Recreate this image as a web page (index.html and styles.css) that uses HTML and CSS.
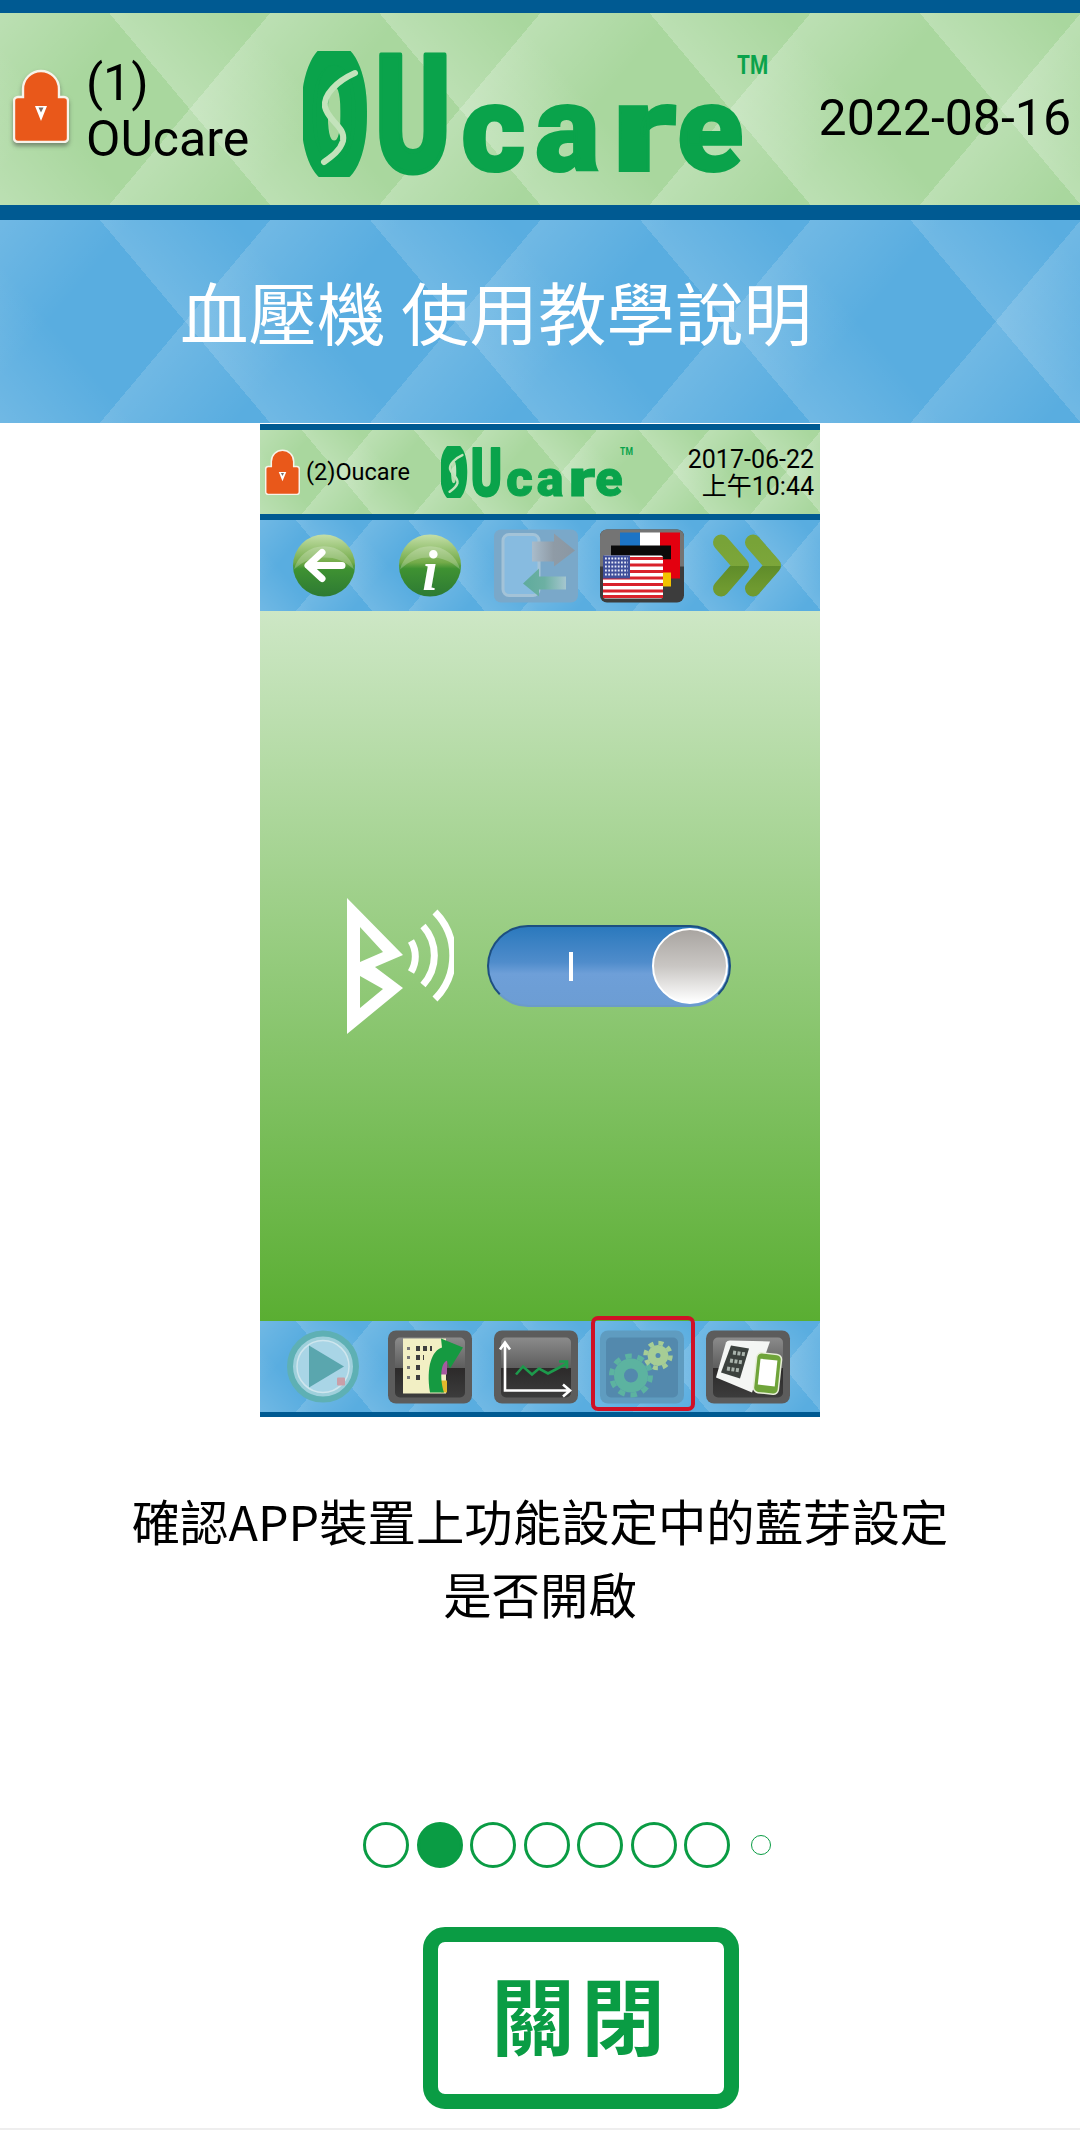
FILE: index.html
```html
<!DOCTYPE html>
<html lang="zh-Hant">
<head>
<meta charset="utf-8">
<title>OUcare</title>
<link rel="stylesheet" href="styles.css">
</head>
<body>
<svg class="defs" width="0" height="0" aria-hidden="true">
  <defs>
    <linearGradient id="ballTop" x1="0" y1="0" x2="0" y2="1">
      <stop offset="0" stop-color="#c4dfa8"/><stop offset=".45" stop-color="#73ab49"/><stop offset=".55" stop-color="#3f9232"/><stop offset="1" stop-color="#2d7a33"/>
    </linearGradient>
    <linearGradient id="tile" x1="0" y1="0" x2="0" y2="1">
      <stop offset="0" stop-color="#8b8b8b"/><stop offset=".5" stop-color="#5e5e5e"/><stop offset=".51" stop-color="#2c2a2a"/><stop offset="1" stop-color="#3c3c3c"/>
    </linearGradient>
    <linearGradient id="chev" x1="0" y1="0" x2="0" y2="1">
      <stop offset="0" stop-color="#78a338"/><stop offset=".5" stop-color="#7ca63a"/><stop offset=".51" stop-color="#5f8c2a"/><stop offset="1" stop-color="#6f9a30"/>
    </linearGradient>
    <linearGradient id="fadeGrey" x1="0" y1="0" x2="1" y2="0">
      <stop offset="0" stop-color="#a9bccb"/><stop offset=".5" stop-color="#8f9ba6"/><stop offset="1" stop-color="#8a97a3"/>
    </linearGradient>
    <linearGradient id="fadeTeal" x1="0" y1="0" x2="1" y2="0">
      <stop offset="0" stop-color="#5fab9c"/><stop offset=".5" stop-color="#6cb0a3"/><stop offset="1" stop-color="#a5c6cf"/>
    </linearGradient>
    <symbol id="lock" viewBox="0 0 56 74">
      <path d="M10 28V20a18 18 0 1 1 36 0v8h5a4 4 0 0 1 4 4v37a4 4 0 0 1-4 4H5a4 4 0 0 1-4-4V32a4 4 0 0 1 4-4z" fill="#e9581a" stroke="#f7f3ea" stroke-width="2.400"/>
      <path d="M22 37h12l-6 15z" fill="#fff"/>
      <path d="M25.500 38.500h5l-2.500 5z" fill="#7a6c66"/>
    </symbol>
    <symbol id="logo" viewBox="0 0 480 126">
      <text class="logo-cap logo-o" transform="translate(1 120) scale(.52 .97)">O</text>
      <path class="logo-slash" d="M52 22C34 30 20 44 22 56 25 70 43 76 40 90 37 100 28 106 21 111"/>
      <text class="logo-cap" transform="translate(72 120) scale(.68 .97)">U</text>
      <text class="logo-low" transform="translate(158 120) scale(1.02 1)">c</text>
      <text class="logo-low" transform="translate(232 120) scale(1 1)">a</text>
      <text class="logo-low" transform="translate(309 120) scale(1.4 1)">r</text>
      <text class="logo-low" transform="translate(374 120) scale(1 1)">e</text>
      <text class="logo-tm" transform="translate(434 23) scale(.8 1)">TM</text>
    </symbol>
  </defs>
</svg>

<header class="bar bar-main pattern-green">
  <svg class="lock-big"><use href="#lock"/></svg>
  <div class="user-big">(1)<br>OUcare</div>
  <svg class="logo-big" viewBox="0 0 480 126"><use href="#logo" width="480" height="126"/></svg>
  <div class="date-big">2022-08-16</div>
</header>

<h1 class="title pattern-blue">血壓機 使用教學說明</h1>

<section class="shot">
  <div class="shot-head pattern-green small">
    <svg class="lock-small"><use href="#lock"/></svg>
    <div class="user-small">(2)Oucare</div>
    <svg class="logo-small" viewBox="0 0 480 126"><use href="#logo" width="480" height="126"/></svg>
    <div class="date-small">2017-06-22<br>上午10:44</div>
  </div>

  <div class="toolbar pattern-blue small">
    <svg class="slot" viewBox="0 0 84 72">
      <circle cx="42" cy="36" r="31" fill="url(#ballTop)"/>
      <path d="M12 40a31 31 0 0 1 60 0c-10-9-18-12-30-12s-20 3-30 12z" fill="#fff" opacity=".22"/>
      <path d="M60 36H27M40 23 26 36l14 13" fill="none" stroke="#fff" stroke-width="7" stroke-linecap="round" stroke-linejoin="round"/>
    </svg>
    <svg class="slot" viewBox="0 0 84 72">
      <circle cx="42" cy="36" r="31" fill="url(#ballTop)"/>
      <path d="M12 40a31 31 0 0 1 60 0c-10-9-18-12-30-12s-20 3-30 12z" fill="#fff" opacity=".22"/>
      <text class="info-i" x="42" y="60">i</text>
    </svg>
    <svg class="slot" viewBox="0 0 84 72">
      <rect width="84" height="73" rx="7" fill="#7aa8c9"/>
      <rect x="9" y="5" width="36" height="61" rx="6" fill="#87bbe0" stroke="#a3c3d8" stroke-width="3"/>
      <path d="M38 12H60V4L81 21 60 37V32H38z" fill="url(#fadeGrey)"/>
      <path d="M72 47H45V39L29 54 45 67V60H72z" fill="url(#fadeTeal)"/>
    </svg>
    <svg class="slot" viewBox="0 0 84 72">
      <rect width="84" height="73" rx="7" fill="#3c3c3c"/>
      <path d="M0 7a7 7 0 0 1 7-7h70a7 7 0 0 1 7 7v30H0z" fill="#747474"/>
      <rect x="20" y="3" width="20" height="16" fill="#1c74c6"/>
      <rect x="40" y="3" width="20" height="16" fill="#fff"/>
      <rect x="60" y="3" width="20" height="46" fill="#e3000f"/>
      <rect x="11" y="16" width="60" height="14" fill="#0a0a0a"/>
      <rect x="11" y="30" width="60" height="13" fill="#e3000f"/>
      <rect x="63" y="43" width="8" height="14" fill="#f2c200"/>
      <rect x="3" y="26" width="60" height="43" rx="2" fill="#fff"/>
      <path d="M3 29h60M3 35.500h60M3 42h60M3 48.500h60M3 55h60M3 61.500h60M3 67h60" stroke="#d9222b" stroke-width="3.200"/>
      <rect x="3" y="26" width="27" height="23" fill="#3f4f9a"/>
      <path d="M5 29h23M5 33h23M5 37h23M5 41h23M5 45h23" stroke="#e6eaf8" stroke-width="1.800" stroke-dasharray="1.800 1.400"/>
    </svg>
    <svg class="slot" viewBox="0 0 84 72">
      <path d="M15 13 35 36 15 59" fill="none" stroke="url(#chev)" stroke-width="16" stroke-linecap="round" stroke-linejoin="round"/>
      <path d="M47 13 67 36 47 59" fill="none" stroke="url(#chev)" stroke-width="16" stroke-linecap="round" stroke-linejoin="round"/>
    </svg>
  </div>

  <div class="setting">
    <svg class="bt" viewBox="0 0 107 136">
      <path fill-rule="evenodd" fill="#fff" d="M0 0 56 57 28 69 56 90 0 136zM13 29V64L36 54zM13 78V110L36 91z"/>
      <path d="M64 43a30 30 0 0 1 0 31M76 28a44 44 0 0 1 0 59M88 14a62 62 0 0 1 0 87" fill="none" stroke="#fff" stroke-width="7"/>
    </svg>
    <div class="toggle">
      <span class="toggle-mark"></span>
      <span class="toggle-knob"></span>
    </div>
  </div>

  <div class="toolbar toolbar-bottom pattern-blue small">
    <svg class="slot" viewBox="0 0 84 72">
      <circle cx="41" cy="36" r="33" fill="#9fd0dc" stroke="#5eb0b4" stroke-width="6"/>
      <circle cx="41" cy="36" r="26" fill="#a9d5e6" stroke="#cfe6ee" stroke-width="1.500"/>
      <path d="M27 15 62 36 27 57z" fill="#5aa6ae"/>
      <rect x="55" y="47" width="8" height="8" rx="1" fill="#c99fa8"/>
    </svg>
    <svg class="slot" viewBox="0 0 84 72">
      <rect x="0" width="84" height="73" rx="8" fill="#5c5c5c"/>
      <rect x="7" y="7" width="70" height="60" rx="5" fill="url(#tile)"/>
      <rect x="15" y="8" width="43" height="55" fill="#f2efc4"/>
      <path d="M19 18h3M19 27h3M19 37h3M19 47h3" stroke="#777" stroke-width="3"/>
      <path d="M28 18h16M28 27h8M28 37h6M28 47h6" stroke="#3e3e3e" stroke-width="5" stroke-dasharray="4 3"/>
      <rect x="53" y="30" width="6" height="14" fill="#a65aa0"/>
      <rect x="53" y="50" width="6" height="12" fill="#e3b92c"/>
      <path d="M42 62C38 36 44 20 54 17L53 8 75 17 62 38 59 30C52 33 52 50 56 62z" fill="#159a41"/>
    </svg>
    <svg class="slot" viewBox="0 0 84 72">
      <rect x="0" width="84" height="73" rx="8" fill="#5c5c5c"/>
      <rect x="7" y="7" width="70" height="60" rx="5" fill="url(#tile)"/>
      <path d="M11 13V60H76M6 19 11 12l5 7M69 54l7 6-7 6" fill="none" stroke="#fff" stroke-width="2.600"/>
      <path d="M22 44 29 36 38 44 45 38 54 43 73 33M65 31h8v7" fill="none" stroke="#1d9a4c" stroke-width="2.600"/>
    </svg>
    <div class="slot-wrap">
      <svg class="slot" viewBox="0 0 84 72">
        <rect width="84" height="73" rx="8" fill="#5f9cc0"/>
        <rect x="6" y="7" width="72" height="60" rx="5" fill="#5389ad"/>
        <circle cx="31" cy="45" r="12" fill="none" stroke="#5cb3a0" stroke-width="10"/>
        <circle cx="31" cy="45" r="19.500" fill="none" stroke="#5cb3a0" stroke-width="5" stroke-dasharray="6.500 5.730"/>
        <circle cx="58" cy="25" r="6.500" fill="none" stroke="#a6cd95" stroke-width="8"/>
        <circle cx="58" cy="25" r="12.500" fill="none" stroke="#a6cd95" stroke-width="4.500" stroke-dasharray="5 4.820"/>
      </svg>
      <span class="highlight"></span>
    </div>
    <svg class="slot" viewBox="0 0 84 72">
      <rect x="0" width="84" height="73" rx="8" fill="#5c5c5c"/>
      <rect x="7" y="7" width="70" height="60" rx="5" fill="url(#tile)"/>
      <path d="M20 12Q21 10 24 10L64 11 46 62 10 47z" fill="#f4f6f4"/>
      <path d="M25 15 43 18 34 48 15 42z" fill="#3c423e"/>
      <path d="M27 22 40 24M24 30 37 32M21 38 34 40" stroke="#a9b3ac" stroke-width="4" stroke-dasharray="3 1.500"/>
      <rect x="49" y="23" width="25" height="40" rx="5" fill="#6fa43a" stroke="#e7eed8" stroke-width="1.500" transform="rotate(6 61 43)"/>
      <rect x="53" y="29" width="17" height="26" fill="#fff" transform="rotate(6 61 43)"/>
    </svg>
  </div>
</section>

<p class="caption">確認APP裝置上功能設定中的藍芽設定<br>是否開啟</p>

<div class="dots">
  <span class="dot"></span>
  <span class="dot dot-on"></span>
  <span class="dot"></span>
  <span class="dot"></span>
  <span class="dot"></span>
  <span class="dot"></span>
  <span class="dot"></span>
  <span class="dot-small"></span>
</div>

<div class="close-btn">關閉</div>
</body>
</html>
```

FILE: styles.css
```css
* { box-sizing: border-box; }
html, body { margin: 0; padding: 0; background: #fff; }
body {
  width: 1080px;
  height: 2130px;
  overflow: hidden;
  font-family: Roboto, "Noto Sans CJK TC", sans-serif;
  color: #000;
  border-bottom: 2px solid #eeeeee;
}
.defs { position: absolute; }

.pattern-green, .pattern-blue { --p: 207px; }
.small { --p: 86px; }
.pattern-green {
  background-color: #a9d79e;
  background-image:
    repeating-linear-gradient(50deg, rgba(255,255,255,.22) 0, rgba(255,255,255,0) calc(var(--p) * .5), rgba(255,255,255,0) var(--p)),
    repeating-linear-gradient(130deg, rgba(255,255,255,.22) 0, rgba(255,255,255,0) calc(var(--p) * .5), rgba(255,255,255,0) var(--p));
}
.pattern-blue {
  background-color: #59ade0;
  background-image:
    repeating-linear-gradient(50deg, rgba(255,255,255,.14) 0, rgba(255,255,255,0) calc(var(--p) * .5), rgba(255,255,255,0) var(--p)),
    repeating-linear-gradient(130deg, rgba(255,255,255,.14) 0, rgba(255,255,255,0) calc(var(--p) * .5), rgba(255,255,255,0) var(--p));
}

.bar-main {
  height: 220px;
  border-top: 13px solid #005a92;
  border-bottom: 15px solid #005a92;
  display: flex;
  align-items: center;
  padding: 0 9px 0 13px;
}
.lock-big { width: 56px; height: 74px; margin-bottom: 7px; flex: none; filter: drop-shadow(0 3px 2px rgba(60,60,60,.5)); }
.user-big { font-size: 50px; line-height: 56px; margin-left: 17px; margin-top: 4px; width: 169px; flex: none; white-space: nowrap; }
.logo-big { width: 480px; height: 126px; margin-left: 48px; margin-top: 10px; flex: none; }
.date-big { font-size: 50px; line-height: 56px; margin-left: auto; margin-top: 18px; white-space: nowrap; }

.logo-cap { font: 900 168px Roboto, sans-serif; fill: #0aa34b; stroke: #0aa34b; stroke-width: 5px; stroke-linejoin: round; }
.logo-o { stroke-width: 22px; }
.logo-slash { fill: none; stroke: #c3e3bb; stroke-width: 6px; stroke-linecap: round; }
.logo-low { font: 900 122px Roboto, sans-serif; fill: #0aa34b; stroke: #0aa34b; stroke-width: 2px; }
.logo-tm { font: 700 26px Roboto, sans-serif; fill: #0aa34b; }

.title {
  margin: 0;
  height: 203px;
  display: flex;
  align-items: center;
  justify-content: center;
  padding: 0 88px 20px 0;
  font: 400 68.500px/1 "Noto Sans CJK TC", sans-serif;
  color: #fff;
}

.shot { width: 560px; margin: 1px auto 0; }
.shot-head {
  height: 96px;
  border-top: 6px solid #005a92;
  border-bottom: 6px solid #005a92;
  display: flex;
  align-items: center;
  padding: 0 6px 0 5px;
}
.lock-small { width: 35px; height: 46px; flex: none; }
.user-small { font-size: 23.500px; margin-left: 6px; width: 104px; flex: none; white-space: nowrap; }
.logo-small { width: 200px; height: 52px; margin-left: 30px; flex: none; }
.date-small { font-size: 25px; line-height: 27px; text-align: right; margin-left: auto; margin-top: 2px; white-space: nowrap; }

.toolbar {
  height: 91px;
  display: flex;
  align-items: center;
  gap: 22px;
  padding-left: 22px;
}
.toolbar-bottom { height: 96px; border-bottom: 5px solid #005a92; }
.slot { width: 84px; height: 73px; display: block; flex: none; overflow: visible; }
.slot-wrap { position: relative; flex: none; }
.highlight {
  position: absolute;
  left: -9px;
  right: -11px;
  top: -14px;
  bottom: -8px;
  border: 4px solid #cf1126;
  border-radius: 7px;
}
.info-i { font: italic 700 56px "Liberation Serif", serif; fill: #fff; text-anchor: middle; }

.setting {
  height: 710px;
  background: linear-gradient(#cde7c5, #5aae32);
  display: flex;
  align-items: center;
  gap: 33px;
  padding-left: 87px;
}
.bt { width: 107px; height: 136px; flex: none; }
.toggle {
  width: 244px;
  height: 82px;
  border-radius: 41px;
  background: linear-gradient(#2b79bd 0, #4f8ccb 45%, #6e9fd8 60%, #6c9dd4 100%);
  border: 2px solid #1d4f80;
  border-bottom-color: #6b9bc9;
  display: flex;
  align-items: center;
  padding: 0 1px 0 80px;
}
.toggle-mark { width: 4px; height: 29px; background: #fff; flex: none; }
.toggle-knob {
  width: 76px;
  height: 76px;
  margin-left: auto;
  border-radius: 50%;
  background: linear-gradient(#a9a5a1, #c9c6c3 50%, #fff);
  border: 2px solid #fff;
  flex: none;
}

.caption {
  margin: 67px 0 0;
  font: 400 48.400px/73px "Noto Sans CJK TC", sans-serif;
  text-align: center;
  color: #000;
}

.dots {
  display: flex;
  align-items: center;
  gap: 7.500px;
  margin-top: 192px;
  padding-left: 363px;
}
.dot { width: 46px; height: 46px; border-radius: 50%; border: 3.500px solid #0a9c44; flex: none; }
.dot-on { background: #0a9c44; }
.dot-small { width: 20px; height: 20px; border-radius: 50%; border: 1.500px solid #0a9c44; margin-left: 13.500px; flex: none; }

.close-btn {
  width: 316px;
  height: 182px;
  margin: 59px 0 0 423px;
  padding-bottom: 10px;
  border: 15px solid #0a9c44;
  border-radius: 22px;
  display: flex;
  align-items: center;
  justify-content: center;
  font: 700 84px/1 "Noto Sans CJK TC", sans-serif;
  letter-spacing: 6px;
  color: #0a9c44;
  filter: blur(.5px);
}
```
